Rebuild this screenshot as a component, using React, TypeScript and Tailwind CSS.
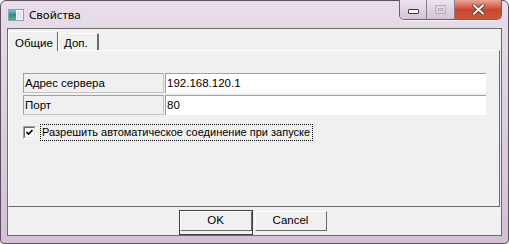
import React from "react";

function TitleButtons() {
  return (
    <div className="absolute top-[-1px] right-[6px] flex h-[20px] rounded-b-[5px] border border-t-0 border-[#6b5f6e] overflow-hidden shadow-[0_1px_0_rgba(255,255,255,0.7)]">
      <div className="w-[27px] flex items-center justify-center bg-gradient-to-b from-[#ece4ee] to-[#d3c5d6] border-r border-[#8a7f8c]">
        <div className="w-[11px] h-[5px] mt-[4px] bg-white border border-[#3c3c3c] rounded-[1px]" />
      </div>
      <div className="w-[28px] flex items-center justify-center bg-gradient-to-b from-[#ece4ee] to-[#d3c5d6] border-r border-[#8a7f8c]">
        <div className="w-[11px] h-[9px] border border-[#b8aebb] flex items-center justify-center">
          <div className="w-[5px] h-[3px] border border-[#b8aebb]" />
        </div>
      </div>
      <div className="w-[46px] flex items-center justify-center bg-gradient-to-b from-[#e9a597] via-[#c8472f] to-[#d0543c]">
        <svg width="13" height="11" viewBox="0 0 13 11">
          <path d="M2 1.5 L11 9.5 M11 1.5 L2 9.5" stroke="#3a2a2a" strokeWidth="3.4" strokeLinecap="square" />
          <path d="M2 1.5 L11 9.5 M11 1.5 L2 9.5" stroke="#ffffff" strokeWidth="2" strokeLinecap="square" />
        </svg>
      </div>
    </div>
  );
}

function AppIcon() {
  return (
    <svg width="16" height="12" viewBox="0 0 16 12" className="shrink-0">
      <defs>
        <linearGradient id="ic" x1="0" y1="0" x2="0" y2="1">
          <stop offset="0" stopColor="#7fc0d8" />
          <stop offset="0.5" stopColor="#2f8a8c" />
          <stop offset="1" stopColor="#5fae6c" />
        </linearGradient>
      </defs>
      <rect x="0.5" y="0.5" width="15" height="11" fill="#f4f6f8" stroke="#8aa0b4" />
      <rect x="1" y="1" width="7" height="10" fill="url(#ic)" />
      <rect x="9" y="2" width="5" height="8" fill="#dfe8ef" />
    </svg>
  );
}

function Field({ label, value }: { label: string; value: string }) {
  return (
    <div className="flex gap-[1px] h-[20px]">
      <div className="w-[141px] border border-[#c4c4c4] border-t-[#a0a0a0] border-l-[#a0a0a0] bg-[#f0f0f0] pl-[1px] leading-[18px]">
        {label}
      </div>
      <div className="w-[321px] border-t border-l border-[#a0a0a0] bg-white pl-[1px] leading-[18px]">
        {value}
      </div>
    </div>
  );
}

function Button({ children, def }: { children: React.ReactNode; def?: boolean }) {
  return (
    <div className={def ? "border border-[#404040]" : "border border-transparent"}>
      <div className="w-[72px] h-[20px] border border-white border-r-[#696969] border-b-[#696969] bg-[#f0f0f0] flex items-center justify-center leading-none">
        {children}
      </div>
    </div>
  );
}

export default function App() {
  return (
    <div className="w-[509px] h-[244px] relative rounded-t-[6px] rounded-b-[4px] border border-[#5b5060] bg-gradient-to-b from-[#e8dde9] via-[#ddcfdf] to-[#d5bfd7] flex flex-col px-[6px] pb-[7px] text-black font-['Liberation_Sans',Arial,sans-serif] text-[11.5px]">
      <div className="h-[27px] flex items-center pl-[1px] gap-[5px] pt-[1px]">
        <AppIcon />
        <span className="font-['Noto_Sans',sans-serif] text-[11.5px] text-black">Свойства</span>
      </div>
      <TitleButtons />

      <div className="flex-1 border border-[#6b6b6b] bg-[#f0f0f0] flex flex-col">
        <div className="flex items-end pt-[2px]">
          <div className="relative z-10 -mb-px h-[20px] w-[50px] border-t border-l border-white border-r border-r-[#696969] bg-[#f0f0f0] rounded-t-[2px] flex justify-center pt-[3px] pl-[2px]">
            Общие
          </div>
          <div className="h-[17px] w-[41px] border-t border-l border-white border-r-2 border-r-[#696969] bg-[#f0f0f0] rounded-t-[2px] pl-[5px] pt-[1px]">
            Доп.
          </div>
        </div>

        <div className="h-[157px] border border-white border-r-[#696969] border-b-[#696969] mr-[1px] pl-[14px] pt-[22px] flex flex-col">
          <div className="flex flex-col gap-[2px]">
            <Field label="Адрес сервера" value="192.168.120.1" />
            <Field label="Порт" value="80" />
          </div>
          <div className="flex items-center mt-[9px] h-[17px]">
            <div className="w-[13px] h-[13px] border border-[#a0a0a0] border-r-white border-b-white">
              <div className="w-[11px] h-[11px] border border-[#696969] border-r-[#e3e3e3] border-b-[#e3e3e3] bg-white flex items-center justify-center">
                <svg width="7" height="7" viewBox="0 0 7 7">
                  <path d="M0.5 3 L2.5 5 L6.5 1" stroke="#000" strokeWidth="1.6" fill="none" />
                </svg>
              </div>
            </div>
            <div className="ml-[4px] h-[17px] w-[273px] border border-dotted border-black leading-[15px] pl-[1px] whitespace-nowrap overflow-hidden text-[11px]">
              Разрешить автоматическое соединение при запуске
            </div>
          </div>
        </div>

        <div className="flex-1 flex justify-center gap-[1px] pt-[3px] pr-[3px]">
          <Button def>OK</Button>
          <Button>Cancel</Button>
        </div>
      </div>
    </div>
  );
}
